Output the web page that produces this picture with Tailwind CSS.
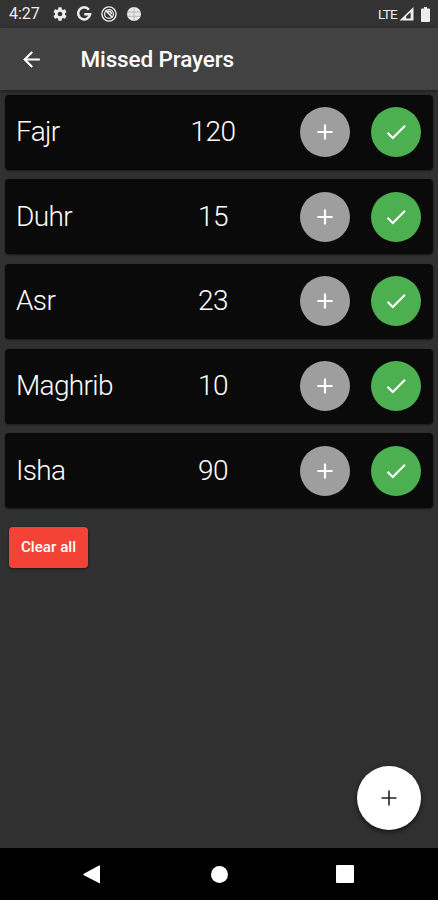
<!DOCTYPE html>
<html lang="en">
<head>
<meta charset="utf-8">
<title>Missed Prayers</title>
<script src="https://cdn.jsdelivr.net/npm/@tailwindcss/browser@4"></script>
</head>
<body class="bg-[#303030]">
<svg class="hidden">
  <symbol id="plus" viewBox="0 0 24 24"><path d="M19 13h-6v6h-2v-6H5v-2h6V5h2v6h6v2z"/></symbol>
  <symbol id="check" viewBox="0 0 24 24"><path d="M9 16.17L4.83 12l-1.42 1.41L9 19 21 7l-1.41-1.41z"/></symbol>
</svg>
<div class="relative flex h-[900px] w-[438px] flex-col overflow-hidden bg-[#303030] font-[Roboto,sans-serif] text-white">
  <div class="flex h-7 shrink-0 items-center bg-[#333333] pr-[8px] pl-[9px] text-[#ececec]">
    <span class="w-[43px] text-[16px] leading-7">4:27</span>
    <svg class="size-4" viewBox="0 0 24 24" fill="currentColor"><path d="M19.43 12.98c.04-.32.07-.64.07-.98s-.03-.66-.07-.98l2.11-1.65c.19-.15.24-.42.12-.64l-2-3.46c-.12-.22-.39-.3-.61-.22l-2.49 1c-.52-.4-1.08-.73-1.69-.98l-.38-2.65C14.46 2.18 14.25 2 14 2h-4c-.25 0-.46.18-.49.42l-.38 2.65c-.61.25-1.17.59-1.69.98l-2.49-1c-.23-.09-.49 0-.61.22l-2 3.46c-.13.22-.07.49.12.64l2.11 1.65c-.04.32-.07.65-.07.98s.03.66.07.98l-2.11 1.65c-.19.15-.24.42-.12.64l2 3.46c.12.22.39.3.61.22l2.49-1c.52.4 1.08.73 1.69.98l.38 2.65c.03.24.24.42.49.42h4c.25 0 .46-.18.49-.42l.38-2.65c.61-.25 1.17-.59 1.69-.98l2.49 1c.23.09.49 0 .61-.22l2-3.46c.12-.22.07-.49-.12-.64l-2.11-1.65zM12 15.5a3.5 3.5 0 1 1 0-7 3.5 3.5 0 0 1 0 7z"/></svg>
    <svg class="ml-2 size-4" viewBox="0 0 16 16" fill="none" stroke="currentColor" stroke-width="2.5"><path d="M12.9 3.7A6 6 0 1 0 14.1 8.2H8.3"/></svg>
    <svg class="ml-[9px] size-4" viewBox="0 0 16 16" fill="none" stroke="currentColor"><circle cx="8" cy="8" r="7.1" stroke-width="1.4"/><circle cx="8" cy="8" r="4.4" stroke-width="1.3"/><path d="M4.5 4.5l7 7M6.500 5.800c2-1 4 .2 3.800 2.400" stroke-width="1.6"/></svg>
    <svg class="ml-[9px] size-4" viewBox="0 0 16 16"><circle cx="8" cy="8" r="7" fill="#e8e8e8"/><path d="M8 1v14M1.500 6h13M1.500 10.300h13" fill="none" stroke="#999" stroke-width=".6"/></svg>
    <span class="ml-auto text-[13.500px] leading-7 tracking-[-0.700px]">LTE</span>
    <svg class="ml-[2px] h-[14px] w-[15px]" viewBox="0 0 15 14"><path d="M14.500 0v13.500H.5z" fill="currentColor"/><path d="M11.600 5.300v6.200H7.200V9.300z" fill="#333"/></svg>
    <svg class="ml-[7px] h-[15px] w-[9px]" viewBox="0 0 9 15" fill="currentColor"><path d="M3 0h3v1.600h2q1 0 1 1V14q0 1-1 1H1q-1 0-1-1V2.600q0-1 1-1h2z"/></svg>
  </div>
  <header class="z-10 flex h-[62px] shrink-0 items-center bg-[#424242] pl-[19px] shadow-[0_1px_4px_rgba(0,0,0,0.5)]">
    <svg class="size-[25px]" viewBox="0 0 24 24" fill="currentColor"><path d="M20 11H7.830l5.590-5.590L12 4l-8 8 8 8 1.410-1.410L7.830 13H20v-2z"/></svg>
    <h1 class="ml-[36.500px] text-[22.500px] leading-8 font-medium tracking-[-0.130px]">Missed Prayers</h1>
  </header>
  <main class="flex grow flex-col px-[5px] pt-[4.500px]">
    <ul id="list" class="flex flex-col gap-[9.700px]"></ul>
    <button class="mt-[18.500px] ml-1 h-[41px] w-[79px] rounded-[4px] bg-[#f44336] text-[15.200px] font-medium shadow-[0_1px_3px_rgba(0,0,0,0.5)]">Clear all</button>
  </main>
  <button class="absolute top-[766px] left-[357px] flex size-16 items-center justify-center rounded-full bg-white text-[#222] shadow-[0_2px_5px_rgba(0,0,0,0.6)]"><svg class="size-[26px]" fill="none" stroke="currentColor" stroke-width="1.600" viewBox="0 0 26 26"><path d="M13 5.500v15M5.500 13h15"/></svg></button>
  <nav class="flex h-[52px] shrink-0 items-center bg-black pl-[83px]">
    <svg class="h-[19px] w-[18px]" viewBox="0 0 18 19" fill="white"><path d="M17 .5v18L.8 10.200q-1-.7 0-1.400L16 .400z"/></svg>
    <span class="ml-[110px] size-[17px] rounded-full bg-white"></span>
    <span class="ml-[108px] size-[18px] rounded-[1px] bg-white"></span>
  </nav>
</div>
<script>
  const prayers = [['Fajr', 120], ['Duhr', 15], ['Asr', 23], ['Maghrib', 10], ['Isha', 90]];
  document.getElementById('list').innerHTML = prayers.map(([name, count]) => `
    <li class="flex h-[75px] items-center rounded-[4px] bg-[#0a0a0a] pr-3 pl-[11px] shadow-[0_1px_2px_rgba(0,0,0,0.5)]">
      <span class="w-[147px] text-[28px] leading-8 font-light tracking-[-0.650px]">${name}</span>
      <span class="w-[100px] text-center text-[28px] leading-8 font-light tracking-[-0.500px]">${count}</span>
      <button class="ml-auto flex size-[50px] items-center justify-center rounded-full bg-[#9e9e9e]"><svg class="size-[26px]" viewBox="0 0 24 24" fill="white"><use href="#plus"/></svg></button>
      <button class="ml-[21px] flex size-[50px] items-center justify-center rounded-full bg-[#4caf50]"><svg class="size-[26px]" viewBox="0 0 24 24" fill="white"><use href="#check"/></svg></button>
    </li>`).join('');
</script>
</body>
</html>
